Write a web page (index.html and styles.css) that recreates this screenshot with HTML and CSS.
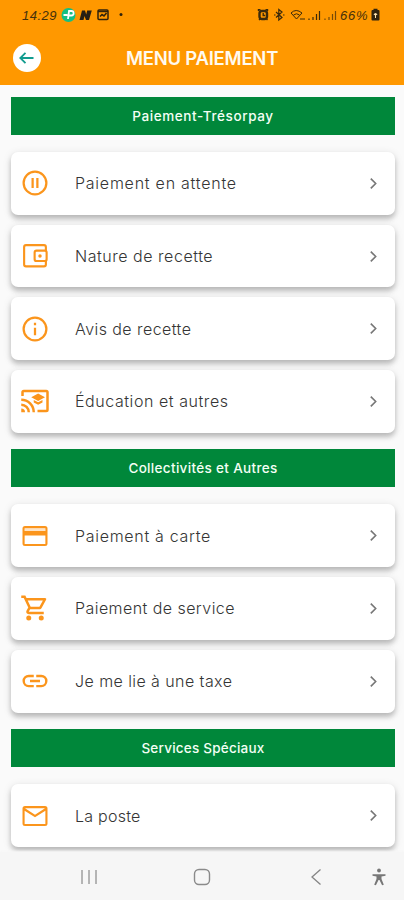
FILE: index.html
```html
<!DOCTYPE html>
<html lang="fr">
<head>
<meta charset="utf-8">
<meta name="viewport" content="width=device-width, initial-scale=1">
<title>Menu paiement</title>
<link rel="stylesheet" href="styles.css">
</head>
<body>
<header class="header">
  <div class="status">
    <span class="time">14:29</span>
    <svg class="notifications" width="66" height="16" viewBox="0 0 66 16">
      <circle cx="7.500" cy="8" r="7" fill="#16bf83"/>
      <path d="M2.500 8h4M7 12l1-8h2.400a2.200 2.200 0 010 4.500H7.500" fill="none" stroke="#fff" stroke-width="1.800"/>
      <path d="M18.500 13L21 3.500h3l1.200 4 1-4h4.600L28 13h-3l-1.500-4-1 4z" fill="#292014"/>
      <rect x="37" y="3" width="10" height="9.500" rx="1" fill="none" stroke="#30220b" stroke-width="1.500"/>
      <path d="M37 4.500h10M39 9.500l2-2 2 1.500 2.500-3" fill="none" stroke="#30220b" stroke-width="1.600"/>
      <circle cx="60" cy="7.500" r="1.500" fill="#30220b"/>
    </svg>
    <svg class="signals" width="80" height="16" viewBox="0 0 80 16">
      <g fill="none" stroke="#3b2a0b">
        <rect x="2.500" y="4" width="7.500" height="8" rx="2.500" stroke-width="2.400"/>
        <path d="M6.200 6v2.500h2M1.500 4V2.800h2M8.500 2.800h2V4M2 13l1-1M10.500 13l-1-1" stroke-width="1.400"/>
        <path d="M19 5l6 5.500-3.200 2.500V2.500L25 5l-6 5.500M17 8h1.500M26 8h1.500" stroke-width="1.200"/>
        <path d="M34 6q5-5 11 0l-5.500 6zM36.500 8q3-2.500 6 0M43 12h5" stroke-width="1"/>
        <path d="M52 13v-1.500M56 13v-3M59.500 13V7M62.500 13V4" stroke-width="1.200"/>
        <path d="M68 13v-1.500M72 13v-3M75.500 13V7M78.500 13V4" stroke-width="1.200" opacity=".7"/>
      </g>
    </svg>
    <span class="level">66%</span>
    <svg class="battery" width="9" height="14" viewBox="0 0 9 14"><path d="M2.500 2V.8h4V2h1q1 0 1 1v8.500q0 1-1 1h-6q-1 0-1-1V3q0-1 1-1z" fill="#2f230f"/><path d="M2.500 6.500q2-3 4 0L5 7.200V10H4V7.200z" fill="#ffe4b0"/></svg>
  </div>
  <div class="titlebar">
    <button class="back" aria-label="Retour"><svg width="18" height="18" viewBox="0 0 18 18"><path d="M15.500 9H3M7.500 3.800L2.300 9l5.200 5.200" fill="none" stroke="#129c8f" stroke-width="1.800"/></svg></button>
    <h1>MENU PAIEMENT</h1>
  </div>
</header>
<main>
  <section>
    <h2><span class="s-tresor">Paiement-Trésorpay</span></h2>
    <div class="cards">
      <a class="card"><svg class="icon" viewBox="0 0 24 24"><path d="M9.200 8h1.800v8H9.200zm3.800 0h1.800v8H13zm-1-6a10 10 0 100 20 10 10 0 000-20zm0 18.200a8.200 8.200 0 110-16.400 8.200 8.200 0 010 16.400z"/></svg><span class="t-attente">Paiement en attente</span><svg class="chevron" viewBox="0 0 8 12"><path d="M1.500 1.500L6 6l-4.500 4.500"/></svg></a>
      <a class="card"><svg class="icon" viewBox="0 0 24 24"><g fill="none" stroke="#fb951c" stroke-width="1.700"><rect x="3.300" y="3.300" width="17.400" height="17" rx="1.500"/><rect x="11.700" y="7.700" width="9.600" height="8.300" rx="1.500" fill="#fff"/></g><circle cx="16" cy="11.900" r="1.400"/></svg><span class="t-nature">Nature de recette</span><svg class="chevron" viewBox="0 0 8 12"><path d="M1.500 1.500L6 6l-4.500 4.500"/></svg></a>
      <a class="card"><svg class="icon" viewBox="0 0 24 24"><path d="M11.100 7h1.800v2h-1.800zm0 4h1.800v6h-1.800zm.9-9a10 10 0 100 20 10 10 0 000-20zm0 18.200a8.200 8.200 0 110-16.400 8.200 8.200 0 010 16.400z"/></svg><span class="t-avis">Avis de recette</span><svg class="chevron" viewBox="0 0 8 12"><path d="M1.500 1.500L6 6l-4.500 4.500"/></svg></a>
      <a class="card"><svg class="icon" viewBox="0 0 24 24"><path d="M21 3H3a2 2 0 00-2 2v3h2V5h18v14h-7v2h7a2 2 0 002-2V5a2 2 0 00-2-2zM1 18v3h3a3 3 0 00-3-3zm0-4v2a5 5 0 015 5h2a7 7 0 00-7-7zm0-4v2a9 9 0 019 9h2A11 11 0 001 10zm10 1.100v2l3.500 1.900 3.500-1.900v-2L14.500 13zM14.500 6L9 9l5.500 3L20 9z"/></svg><span class="t-education">Éducation et autres</span><svg class="chevron" viewBox="0 0 8 12"><path d="M1.500 1.500L6 6l-4.500 4.500"/></svg></a>
    </div>
  </section>
  <section>
    <h2><span class="s-collect">Collectivités et Autres</span></h2>
    <div class="cards">
      <a class="card"><svg class="icon" viewBox="0 0 24 24"><path d="M20 4H4a2 2 0 00-2 2v12a2 2 0 002 2h16a2 2 0 002-2V6a2 2 0 00-2-2zm.3 14.300H3.700V11.500h16.600zm0-10.300H3.700V5.700h16.600z"/><path d="M4 6h16v2H4z" opacity=".25"/></svg><span class="t-carte">Paiement à carte</span><svg class="chevron" viewBox="0 0 8 12"><path d="M1.500 1.500L6 6l-4.500 4.500"/></svg></a>
      <a class="card"><svg class="icon" viewBox="0 0 24 24"><path d="M15.550 13c.75 0 1.410-.41 1.750-1.030l3.580-6.490A1 1 0 0020.010 4H5.210l-.94-2H1v2h2l3.600 7.590-1.350 2.440C4.520 15.370 5.480 17 7 17h12v-2H7l1.100-2zM6.160 6h12.150l-2.760 5H8.530zM7 18a2 2 0 100 4 2 2 0 000-4zm10 0a2 2 0 100 4 2 2 0 000-4z"/></svg><span class="t-service">Paiement de service</span><svg class="chevron" viewBox="0 0 8 12"><path d="M1.500 1.500L6 6l-4.500 4.500"/></svg></a>
      <a class="card"><svg class="icon" viewBox="0 0 24 24"><path d="M3.900 12A3.100 3.100 0 017 8.900h4V7H7a5 5 0 000 10h4v-1.900H7A3.100 3.100 0 013.900 12zM8 13h8v-2H8zm9-6h-4v1.900h4a3.100 3.100 0 010 6.200h-4V17h4a5 5 0 000-10z"/></svg><span class="t-taxe">Je me lie à une taxe</span><svg class="chevron" viewBox="0 0 8 12"><path d="M1.500 1.500L6 6l-4.500 4.500"/></svg></a>
    </div>
  </section>
  <section>
    <h2><span class="s-special">Services Spéciaux</span></h2>
    <div class="cards">
      <a class="card"><svg class="icon" viewBox="0 0 24 24"><path d="M22 6a2 2 0 00-2-2H4a2 2 0 00-2 2v12a2 2 0 002 2h16a2 2 0 002-2zm-2-.2l-8 5.200-8-5.200zm.3 12.500H3.700V7.700L12 13l8.300-5.300z"/></svg><span class="t-poste">La poste</span><svg class="chevron" viewBox="0 0 8 12"><path d="M1.500 1.500L6 6l-4.500 4.500"/></svg></a>
    </div>
  </section>
</main>
<nav>
  <svg width="18" height="16" viewBox="0 0 18 16"><path d="M2 1v14M9 1v14M16 1v14" stroke="#999" stroke-width="1.400"/></svg>
  <svg width="18" height="18" viewBox="0 0 18 18"><rect x="1.500" y="1.500" width="15" height="15" rx="4.500" fill="none" stroke="#8a8a8a" stroke-width="1.400"/></svg>
  <svg width="12" height="18" viewBox="0 0 12 18"><path d="M10.500 1.500L2 9l8.500 7.500" fill="none" stroke="#858585" stroke-width="1.300"/></svg>
  <svg width="16" height="18" viewBox="0 0 16 18"><circle cx="8" cy="2.500" r="1.900" fill="#777"/><path d="M1.500 6.200h13v1.500l-4 .8V11l2.300 5.800-1.700.5L8.500 12h-1l-2.600 5.300-1.700-.5L5.500 11V8.500l-4-.8z" fill="#777"/></svg>
</nav>
</body>
</html>
```
FILE: styles.css
```css
* { box-sizing: border-box; }
body {
  margin: 0;
  width: 404px;
  height: 900px;
  overflow: hidden;
  display: flex;
  flex-direction: column;
  background: #fafafa;
  font-family: Inter, "Noto Sans", sans-serif;
  color: #353535;
}
.header { height: 85px; flex: none; background: #ff9800; }
.status {
  height: 30px;
  padding: 0 22px 0;
  display: flex;
  align-items: center;
  color: #44300b;
  font: italic 13px "Liberation Sans", sans-serif;
}
.time { width: 39px; letter-spacing: .5px; }
.signals { margin-left: 130px; }
.level { width: 30px; margin-left: 3px; letter-spacing: .8px; white-space: nowrap; }
.battery { margin-left: 1px; }
.titlebar { height: 56px; display: flex; align-items: center; padding-left: 13px; }
.back {
  width: 28px;
  height: 28px;
  padding: 0;
  border: 0;
  border-radius: 50%;
  background: #fff;
  display: grid;
  place-items: center;
}
h1 {
  margin: 0 0 0 85px;
  font-size: 18.500px;
  line-height: 24px;
  font-weight: 600;
  letter-spacing: -.25px;
  color: #fffaf0;
  white-space: nowrap;
}
main { flex: 1; min-height: 0; padding: 12px 9px 0 11px; }
h2 {
  margin: 0;
  height: 38px;
  display: flex;
  align-items: center;
  justify-content: center;
  background: #00873a;
  color: #f4fff5;
  font-size: 13.500px;
  font-weight: 500;
  white-space: nowrap;
}
.cards {
  display: flex;
  flex-direction: column;
  gap: 10px;
  padding: 17px 0 16.700px;
}
section:last-child .cards { padding-bottom: 0; }
.card {
  height: 62.700px;
  display: flex;
  align-items: center;
  padding: 0 17px 0 9px;
  border-radius: 7px;
  background: #fff;
  box-shadow: 0 4px 5px rgba(0, 0, 0, .19), 0 2px 8px rgba(0, 0, 0, .13);
  font-size: 16px;
  font-weight: 300;
  white-space: nowrap;
}
.s-tresor { letter-spacing: .6px; }
.s-collect { letter-spacing: .33px; }
.s-special { letter-spacing: .23px; }
.t-attente { letter-spacing: .76px; }
.t-nature { letter-spacing: .53px; }
.t-avis { letter-spacing: .44px; }
.t-education { letter-spacing: .56px; }
.t-carte { letter-spacing: .7px; }
.t-service { letter-spacing: .44px; }
.t-taxe { letter-spacing: .43px; }
.t-poste { letter-spacing: .25px; }
.icon { width: 30px; height: 30px; margin-right: 25px; fill: #fb951c; flex: none; }
.chevron {
  width: 9px;
  height: 13px;
  margin-left: auto;
  fill: none;
  stroke: #777;
  stroke-width: 1.500;
}
nav {
  height: 48px;
  flex: none;
  display: flex;
  align-items: center;
  padding: 2px 17px 0 80px;
  background: #f6f6f6;
  box-shadow: 0 -1px 2px #f6f6f6;
}
nav svg:nth-child(2) { margin-left: 95px; }
nav svg:nth-child(3) { margin-left: 99px; }
nav svg:nth-child(4) { margin-left: 49px; }
```
